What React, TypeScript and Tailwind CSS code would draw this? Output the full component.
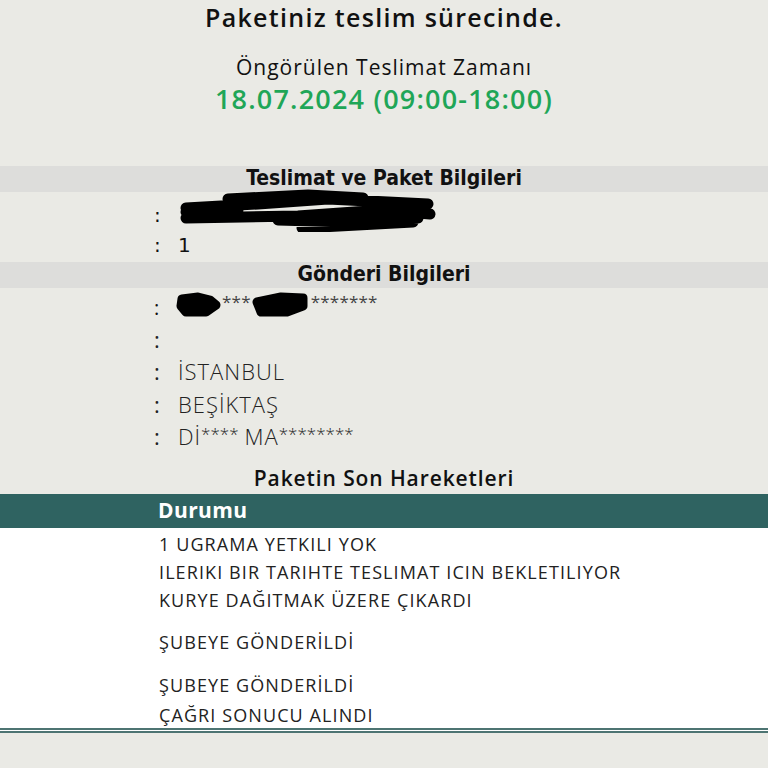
import React from 'react';

const Scribble = ({ w, h, d, sw = 9 }: { w: number; h: number; d: string; sw?: number }) => (
  <svg width={w} height={h} viewBox={`0 0 ${w} ${h}`} className="block">
    <path d={d} fill="none" stroke="#000" strokeWidth={sw} strokeLinecap="round" strokeLinejoin="round" />
  </svg>
);

const senderRows = ['', 'İSTANBUL', 'BEŞİKTAŞ'];

const moves = [
  { text: '1 UGRAMA YETKILI YOK', cls: 'mt-0' },
  { text: 'ILERIKI BIR TARIHTE TESLIMAT ICIN BEKLETILIYOR', cls: 'mt-0' },
  { text: 'KURYE DAĞITMAK ÜZERE ÇIKARDI', cls: 'mt-0' },
  { text: 'ŞUBEYE GÖNDERİLDİ', cls: 'mt-[14px]' },
  { text: 'ŞUBEYE GÖNDERİLDİ', cls: 'mt-[15px]' },
  { text: 'ÇAĞRI SONUCU ALINDI', cls: 'mt-[2px]' },
];

export default function App() {
  const mulish = { fontFamily: '"Open Sans", Lato, sans-serif' };
  const band = { fontFamily: '"DejaVu Sans Condensed", "DejaVu Sans", sans-serif' };
  const tahoma = { fontFamily: '"DejaVu Sans", Verdana, sans-serif' };

  return (
    <div className="w-[768px] h-[768px] overflow-hidden bg-[#eaeae5] text-[#111]">
      {/* header */}
      <div className="flex flex-col items-center" style={mulish}>
        <h1 className="text-[25px] font-semibold leading-[34px] tracking-[1.3px] mt-[0px]">Paketiniz teslim sürecinde.</h1>
        <p className="text-[21px] leading-[26px] tracking-[1px] mt-[20px]">Öngörülen Teslimat Zamanı</p>
        <p className="text-[27px] font-semibold leading-[34px] tracking-[1.2px] mt-[2px] text-[#1fa657]">18.07.2024 (09:00-18:00)</p>
      </div>

      {/* Teslimat ve Paket Bilgileri */}
      <div className="mt-[50px] h-[26px] bg-[#dddddb] flex items-center justify-center">
        <span className="text-[21px] font-bold" style={band}>Teslimat ve Paket Bilgileri</span>
      </div>
      <div className="h-[35px] pl-[154px] flex items-center text-[20px]" style={tahoma}>
        <span className="w-[24px] mt-[10px]">:</span>
        <Scribble
          w={262}
          h={44}
          sw={11}
          d="M8 20 L80 16 L150 11 L250 16 M8 30 L120 28 L205 22 L252 26 M50 11 L130 7 L185 10 M130 36 L240 30 M100 32 L170 34 M124 40 L235 34 M8 24 L60 22 M200 16 L245 20"
        />
      </div>
      <div className="h-[35px] pl-[154px] flex items-center text-[20px]" style={tahoma}>
        <span className="w-[24px]">:</span>
        <span>1</span>
      </div>

      {/* Gönderi Bilgileri */}
      <div className="h-[26px] bg-[#dddddb] flex items-center justify-center">
        <span className="text-[21px] font-bold" style={band}>Gönderi Bilgileri</span>
      </div>
      <div className="h-[33px] pl-[154px] flex items-center text-[20px]" style={mulish}>
        <span className="w-[20px] mt-[6px]">:</span>
        <Scribble w={48} h={28} d="M8 8 L24 6 L36 9 L42 14 L32 21 L12 21 L7 15 Z M14 13 L34 14" />
        <span className="text-[#444] text-[17px] -mt-[6px] tracking-[0.2px]">***</span>
        <Scribble w={60} h={30} d="M6 12 L30 7 L52 8 L52 16 L36 22 L10 22 Z M12 15 L46 13" />
        <span className="text-[#444] text-[17px] -mt-[6px] tracking-[0.2px]">*******</span>
      </div>
      {senderRows.map((v, i) => (
        <div key={i} className={`h-[33px] pl-[154px] flex items-center text-[22px] font-light text-[#222] ${i === 0 ? 'pt-[4px]' : 'pt-[2px]'}`} style={mulish}>
          <span className="w-[24px] font-normal">:</span>
          <span className="tracking-[1px]">{v}</span>
        </div>
      ))}
      <div className="h-[33px] pl-[154px] flex items-center text-[22px] font-light text-[#222]" style={mulish}>
        <span className="w-[24px] font-normal">:</span>
        <span className="tracking-[1px]">Dİ</span>
        <span className="text-[17px] -mt-[6px]">****</span>
        <span className="tracking-[1px] ml-[6px]">MA</span>
        <span className="text-[17px] -mt-[6px]">********</span>
      </div>

      {/* Paketin Son Hareketleri */}
      <div className="h-[41px] flex items-end justify-center pb-[0px]">
        <span className="text-[21px] font-semibold tracking-[0.9px]" style={mulish}>Paketin Son Hareketleri</span>
      </div>
      <div className="h-[34px] bg-[#2f6361] pl-[158px] flex items-center">
        <span className="text-[21px] font-bold text-white tracking-[0.4px]" style={mulish}>Durumu</span>
      </div>
      <div className="bg-white pl-[159px] pt-[2px] h-[205px] border-b-[5px] border-double border-[#4d7472]">
        {moves.map((m, i) => (
          <div key={i} className={`h-[28px] flex items-center text-[18px] text-[#222] tracking-[1.1px] ${m.cls}`} style={mulish}>
            {m.text}
          </div>
        ))}
      </div>
    </div>
  );
}
